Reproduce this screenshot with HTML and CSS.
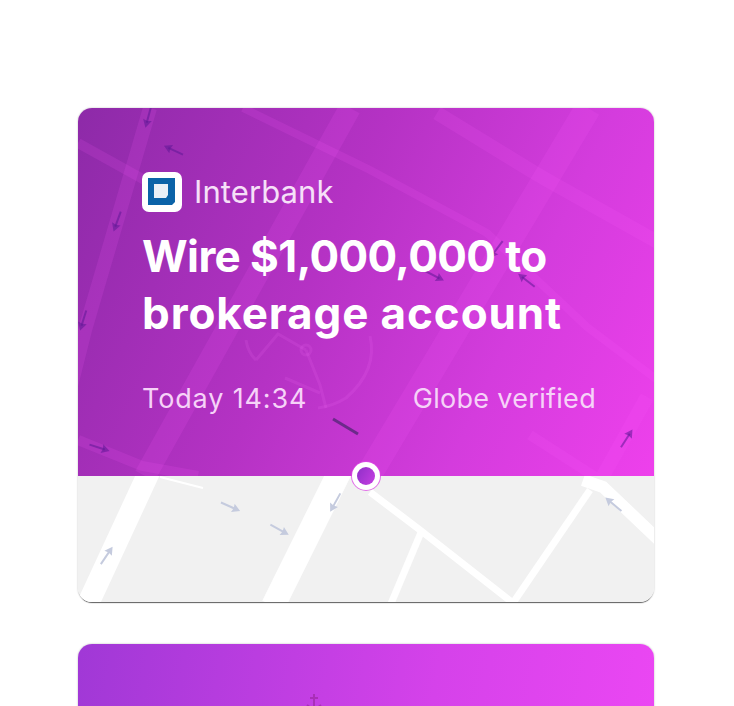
FILE: index.html
```html
<!DOCTYPE html>
<html lang="en">
<head>
<meta charset="utf-8">
<title>Interbank</title>
<link rel="stylesheet" href="styles.css">
</head>
<body>
<main class="stack">
  <article class="card">
    <section class="hero">
      <svg class="hero-map" viewBox="0 0 576 368" aria-hidden="true">
        <defs>
          <g id="arrow">
            <path class="arrow-tail" d="M-11 0 L5 0"/>
            <path class="arrow-head" d="M10 0 L2 -4.5 L3 0 L2 4.5 Z"/>
          </g>
        </defs>
        <g class="roads-hero">
          <path class="w14" d="M72 0 L7 222 L-10 290"/>
          <path class="w22" d="M272 0 L67 368"/>
          <path class="w26" d="M510 0 L290 368"/>
          <path class="w14" d="M359 5 L452 62 L469 72 L585 137"/>
          <path class="w8" d="M165 0 L292 62 L409 125 L509 219 L590 280"/>
          <path class="w10" d="M0 35 L90 85"/>
          <path class="w10" d="M0 332 L64 358 L120 368"/>
          <path class="w14" d="M569 289 L525 368"/>
          <path class="w10" d="M452 327 L522 372"/>
        </g>
        <g class="park">
          <circle cx="228" cy="242" r="5"/>
          <path d="M292 228 Q300 262 268 290 Q255 298 240 300"/>
          <path d="M228 242 L200 226 L178 252 M228 242 L242 277 L248 300 M207 270 L242 285 M168 232 Q170 245 178 252"/>
        </g>
        <g class="arrows-hero">
          <use href="#arrow" transform="translate(70 10) rotate(105)"/>
          <use href="#arrow" transform="translate(95 42) rotate(205)"/>
          <use href="#arrow" transform="translate(39 114) rotate(110)"/>
          <use href="#arrow" transform="translate(5 213) rotate(107)"/>
          <use href="#arrow" transform="translate(418 142) rotate(127)"/>
          <use href="#arrow" transform="translate(357 168) rotate(27)"/>
          <use href="#arrow" transform="translate(448 172) rotate(218)"/>
          <use href="#arrow" transform="translate(22 340) rotate(18)"/>
          <use href="#arrow" transform="translate(549 330) rotate(-57)"/>
        </g>
        <path class="dash" d="M255 311 L280 326"/>
      </svg>
      <div class="hero-content">
        <div class="brand">
          <svg class="logo" viewBox="0 0 40 40" aria-hidden="true">
            <rect class="logo-bg" width="40" height="40" rx="7"/>
            <path class="logo-blue" d="M6 6 H33 V30 L30 33 H6 Z"/>
            <path class="logo-core" d="M12 12 H26 V23 L24 26 H12 Z"/>
          </svg>
          <span class="brand-name">Interbank</span>
        </div>
        <h1 class="title"><span class="line-one">Wire $1,000,000 to</span> <span class="line-two">brokerage account</span></h1>
        <div class="meta">
          <span class="meta-time">Today 14:34</span>
          <span class="meta-status">Globe verified</span>
        </div>
      </div>
    </section>
    <section class="map">
      <svg class="map-svg" viewBox="0 0 576 126" aria-hidden="true">
        <g class="roads">
          <path class="w22" d="M72 -6 L9 130"/>
          <path class="w24" d="M262 -5 L195 130"/>
          <path class="w7" d="M292 16 L342 54 L435 127"/>
          <path class="w7" d="M344 54 L312 130"/>
          <path class="w7" d="M512 14 L435 127"/>
          <path class="w12" d="M505 4 L525 11 L585 68"/>
          <path class="w2" d="M82 1 L125 12"/>
        </g>
        <g class="arrows">
          <use href="#arrow" transform="translate(153 31) rotate(24)"/>
          <use href="#arrow" transform="translate(202 54) rotate(29)"/>
          <use href="#arrow" transform="translate(257 27) rotate(119)"/>
          <use href="#arrow" transform="translate(29 79) rotate(-56)"/>
          <use href="#arrow" transform="translate(535 28) rotate(220)"/>
        </g>
      </svg>
      <span class="pin"><span class="pin-dot"></span></span>
    </section>
  </article>
  <article class="card card-next">
    <svg class="next-glyph" viewBox="0 0 18 14" aria-hidden="true">
      <path d="M9 0 V14 M5 4 H13 M2 11 L6 14 M16 11 L12 14"/>
    </svg>
  </article>
</main>
</body>
</html>
```
FILE: styles.css
```css
* { box-sizing: border-box; }
html, body { margin: 0; }
body {
  background: #fff;
  height: 706px;
  overflow: hidden;
  font-family: "Inter", "Liberation Sans", sans-serif;
}
.stack {
  display: flex;
  flex-direction: column;
  gap: 42px;
  height: 706px;
  overflow: hidden;
  padding: 108px 80px 0 78px;
}
.card {
  position: relative;
  flex: none;
  width: 576px;
  height: 494px;
  border-radius: 14px;
  overflow: hidden;
  display: flex;
  flex-direction: column;
  box-shadow: 0 2px 1px -1px rgba(0, 0, 0, 0.6), 0 0 2px rgba(0, 0, 0, 0.28);
}
.hero {
  position: relative;
  height: 368px;
  flex: none;
  background: linear-gradient(115deg, #8d2aa8 0%, #b532c4 42%, #d43cdd 72%, #ee40ec 100%);
}
.hero-map {
  position: absolute;
  inset: 0;
  width: 576px;
  height: 368px;
}
.roads-hero path {
  fill: none;
  stroke: rgba(255, 90, 255, 0.13);
}
.w2 { stroke-width: 2; }
.w7 { stroke-width: 7; }
.w8 { stroke-width: 8; }
.w10 { stroke-width: 10; }
.w12 { stroke-width: 12; }
.w14 { stroke-width: 14; }
.w22 { stroke-width: 22; }
.w24 { stroke-width: 24; }
.w26 { stroke-width: 26; }
.park circle,
.park path {
  fill: none;
  stroke: rgba(255, 120, 255, 0.12);
  stroke-width: 3;
}
.arrow-tail {
  fill: none;
  stroke-width: 2;
}
.arrows-hero { color: rgba(94, 24, 150, 0.55); }
.arrows { color: #c5cbde; }
#arrow .arrow-tail { stroke: currentColor; }
#arrow .arrow-head { fill: currentColor; }
.dash {
  fill: none;
  stroke: #6c2a8a;
  stroke-width: 3;
}
.hero-content {
  position: relative;
  padding: 64px 58px 0 64px;
}
.brand {
  display: flex;
  align-items: center;
  gap: 12px;
  height: 40px;
}
.logo {
  display: block;
  width: 40px;
  height: 40px;
}
.logo-bg { fill: #fff; }
.logo-blue { fill: #0b63a8; }
.logo-core { fill: #eaf0f7; }
.brand-name {
  color: #f6e0f8;
  font-size: 31px;
  font-weight: 400;
  letter-spacing: 0.1px;
  line-height: 40px;
}
.title {
  margin: 16px 0 0;
  color: #fff;
  font-family: "Inter", "Liberation Sans", sans-serif;
  font-weight: 700;
  font-size: 44px;
  line-height: 57px;
}
.line-one,
.line-two { display: block; white-space: nowrap; }
.line-one { letter-spacing: -0.6px; }
.line-two { letter-spacing: 0.9px; }
.meta {
  display: flex;
  justify-content: space-between;
  margin-top: 39px;
  color: #f6d2f8;
  font-size: 27px;
  font-weight: 400;
  line-height: 36px;
}
.meta-time { letter-spacing: 0.85px; }
.meta-status { letter-spacing: 0.3px; }
.map {
  position: relative;
  flex: 1;
  background: #f1f1f1;
}
.map-svg {
  display: block;
  width: 576px;
  height: 126px;
}
.roads path {
  fill: none;
  stroke: #fff;
}
.pin {
  position: absolute;
  left: 274px;
  top: -14px;
  width: 28px;
  height: 28px;
  border-radius: 50%;
  background: #fff;
  box-shadow: 0 0 0 1px rgba(220, 70, 230, 0.75);
  display: flex;
  align-items: center;
  justify-content: center;
}
.pin-dot {
  width: 18px;
  height: 18px;
  border-radius: 50%;
  background: linear-gradient(120deg, #8f2fc8, #c63fe2);
}
.card-next {
  background: linear-gradient(100deg, #a038d6 0%, #d542ea 55%, #f248f6 100%);
  box-shadow: 0 0 2px rgba(0, 0, 0, 0.3);
}
.next-glyph {
  position: absolute;
  left: 227px;
  top: 50px;
  width: 18px;
  height: 14px;
  fill: none;
  stroke: #a92fb8;
  stroke-width: 2;
}
```
